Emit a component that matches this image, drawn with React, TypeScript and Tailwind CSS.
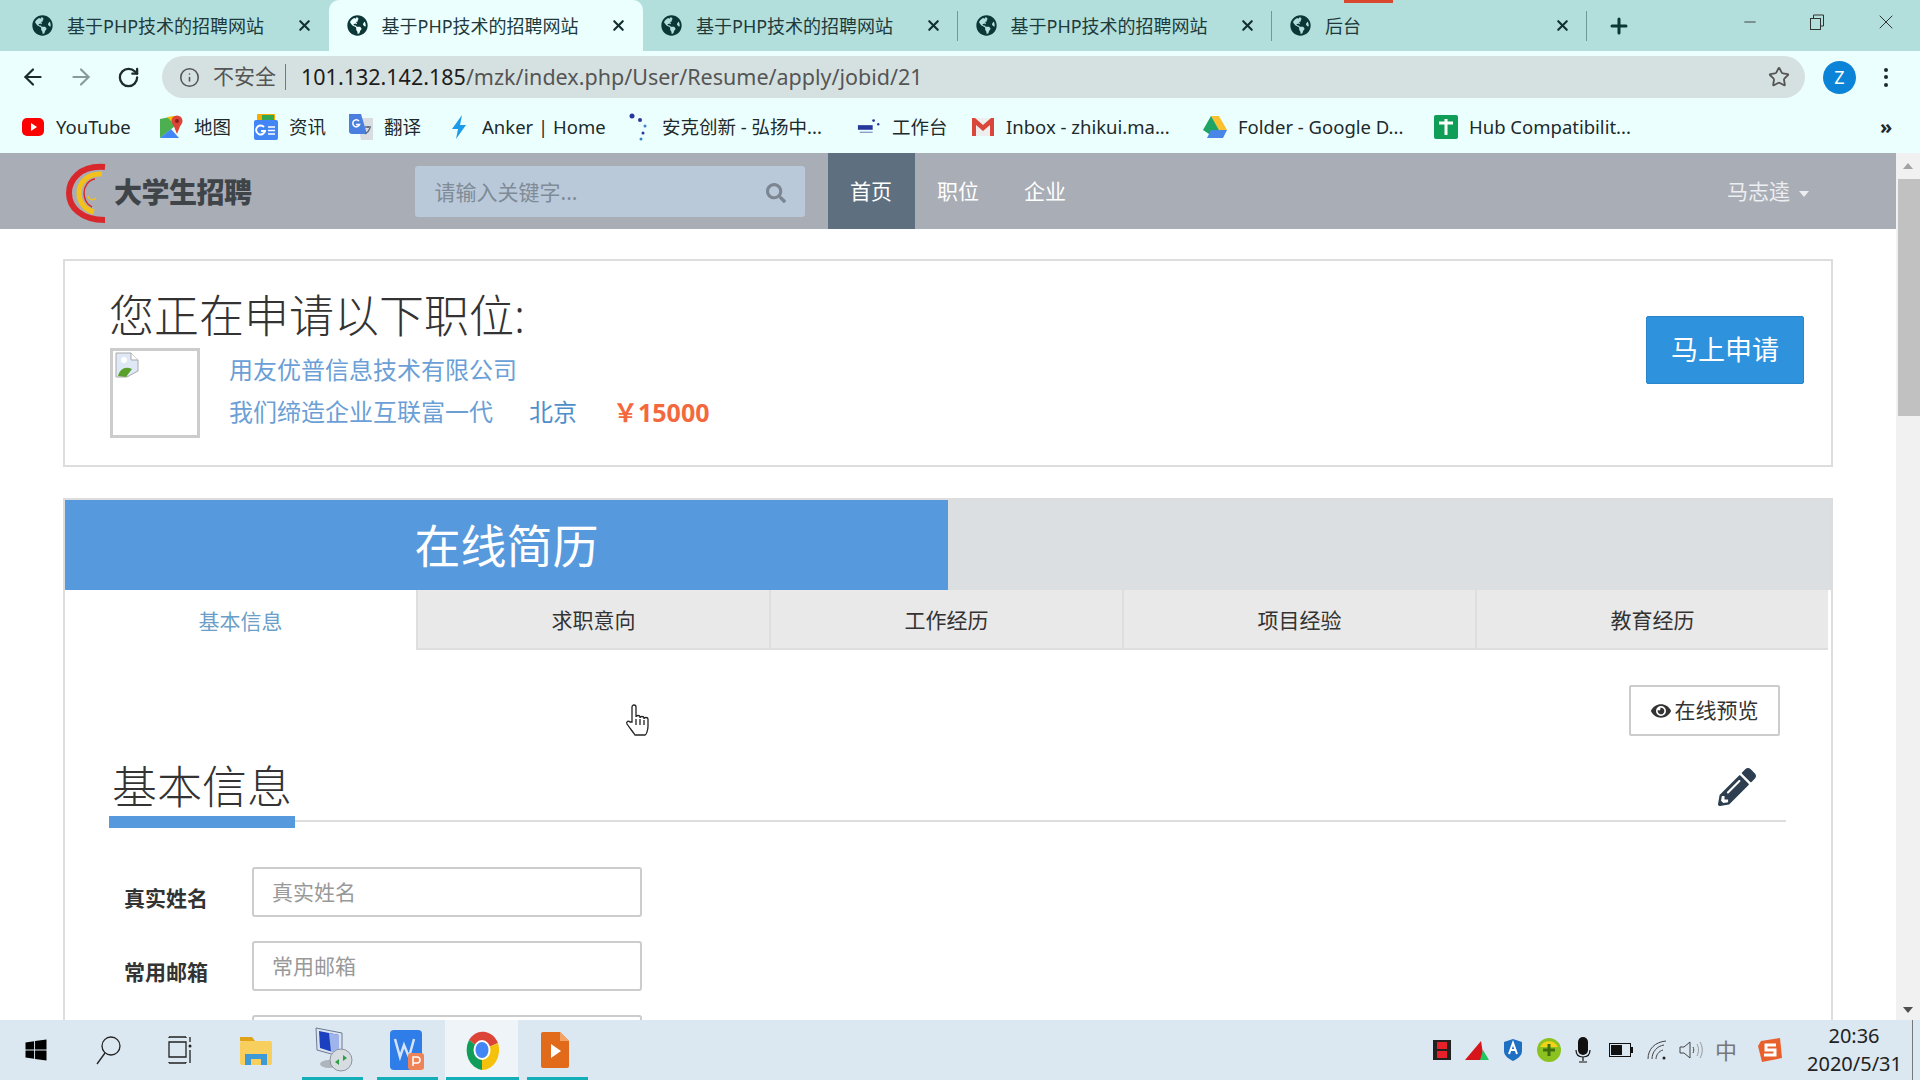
import { ArrowLeft, ArrowRight, Info, Minus, Plus, RotateCw, Star, X } from "lucide-react";
import { FaEye, FaGlobeAmericas, FaPencilAlt, FaSearch, FaWindows } from "react-icons/fa";

const tabs = ["基于PHP技术的招聘网站", "基于PHP技术的招聘网站", "基于PHP技术的招聘网站", "基于PHP技术的招聘网站", "后台"];
const resumeTabs = ["基本信息", "求职意向", "工作经历", "项目经验", "教育经历"];

function YouTubeIcon() {
  return (
    <svg width="22" height="18" viewBox="0 0 22 18">
      <rect x="0" y="0" width="22" height="18" rx="5" fill="#f00" />
      <path d="M9 5l6 4-6 4z" fill="#fff" />
    </svg>
  );
}

function MapsIcon() {
  return (
    <svg width="24" height="26" viewBox="0 0 24 26">
      <path d="M1 5l15-3v10L1 24z" fill="#4caf50" />
      <path d="M1 24l11-9 8 9z" fill="#4285f4" />
      <path d="M8 3l8-1v9z" fill="#fbbc04" />
      <circle cx="18" cy="7" r="5.5" fill="#db4437" />
      <path d="M14 10l4 10 4-10z" fill="#db4437" />
      <circle cx="18" cy="7" r="2" fill="#8c1d18" />
    </svg>
  );
}

function NewsIcon() {
  return (
    <svg width="24" height="26" viewBox="0 0 24 26">
      <rect x="3" y="0" width="18" height="8" rx="1" fill="#f9ab00" />
      <rect x="8" y="1" width="12" height="6" fill="#34a853" />
      <rect x="0" y="6" width="24" height="20" rx="2" fill="#4285f4" />
      <path d="M10 13a4.5 4.5 0 1 0 1 4h-4" fill="none" stroke="#fff" strokeWidth="2" />
      <path d="M14 13h7M14 16.500h7M14 20h7" stroke="#fff" strokeWidth="1.600" />
    </svg>
  );
}

function TranslateIcon() {
  return (
    <svg width="24" height="26" viewBox="0 0 24 26">
      <path d="M8 4h16v22H12z" fill="#d9dde2" />
      <path d="M0 0h12l6 20H3a3 3 0 0 1-3-3z" fill="#4a7fe0" />
      <path d="M10 7a3.500 3.500 0 1 0 .6 3.500H7" fill="none" stroke="#fff" strokeWidth="1.500" />
      <path d="M16 13h6M19 12v2M21 14c-1 3-3 5-5 6" fill="none" stroke="#5f6b7a" strokeWidth="1.300" />
    </svg>
  );
}

function BoltIcon() {
  return (
    <svg width="16" height="24" viewBox="0 0 16 24">
      <path d="M11 0L1 14h6l-2 10 10-14H9z" fill="#1e9be8" />
    </svg>
  );
}

function DotsIcon() {
  return (
    <svg width="22" height="28" viewBox="0 0 22 28">
      <circle cx="4" cy="3" r="2.500" fill="#26389c" />
      <circle cx="12" cy="7" r="2" fill="#26389c" />
      <circle cx="17" cy="13" r="1.500" fill="#3b82c4" />
      <circle cx="15" cy="20" r="1.500" fill="#26389c" />
      <circle cx="13" cy="26" r="1.500" fill="#3b82c4" />
    </svg>
  );
}

function GmailIcon() {
  return (
    <svg width="22" height="18" viewBox="0 0 22 18">
      <rect x="0" y="0" width="22" height="18" fill="#eee" />
      <path d="M0 18V0h3l8 7 8-7h3v18h-4V7l-7 6-7-6v11z" fill="#d9463a" />
    </svg>
  );
}

function DriveIcon() {
  return (
    <svg width="24" height="22" viewBox="0 0 24 22">
      <path d="M8 0h8l8 14h-8z" fill="#fbc02d" />
      <path d="M8 0l8 14-4 8L0 14z" fill="#1fa463" />
      <path d="M4 22l4-8h16l-4 8z" fill="#4a86e8" />
    </svg>
  );
}

function HubIcon() {
  return (
    <svg width="24" height="24" viewBox="0 0 24 24">
      <rect width="24" height="24" rx="2" fill="#0f9d58" />
      <path d="M5 8h14M12 4v16" stroke="#fff" strokeWidth="3" />
    </svg>
  );
}

function AnkerSmallIcon() {
  return (
    <svg width="26" height="20" viewBox="0 0 26 20">
      <circle cx="18" cy="3" r="1.500" fill="#26389c" />
      <circle cx="23" cy="7" r="1.300" fill="#26389c" />
      <rect x="1" y="8" width="16" height="5" fill="#26389c" />
      <rect x="3" y="15" width="14" height="1.500" fill="#8aa0c8" />
    </svg>
  );
}

const bookmarks = [
  { icon: <YouTubeIcon />, label: "YouTube", width: "w-[138px]" },
  { icon: <MapsIcon />, label: "地图", width: "w-[95px]" },
  { icon: <NewsIcon />, label: "资讯", width: "w-[95px]" },
  { icon: <TranslateIcon />, label: "翻译", width: "w-[98px]" },
  { icon: <BoltIcon />, label: "Anker | Home", width: "w-[180px]" },
  { icon: <DotsIcon />, label: "安克创新 - 弘扬中...", width: "w-[230px]" },
  { icon: <AnkerSmallIcon />, label: "工作台", width: "w-[114px]" },
  { icon: <GmailIcon />, label: "Inbox - zhikui.ma...", width: "w-[232px]" },
  { icon: <DriveIcon />, label: "Folder - Google D...", width: "w-[231px]" },
  { icon: <HubIcon />, label: "Hub Compatibilit...", width: "w-[446px]" },
];

function Logo() {
  return (
    <svg width="40" height="62" viewBox="0 0 40 62" fill="none">
      <path d="M39 6C13 4 3 20 3 32c0 14 12 27 36 27" stroke="#d8282c" strokeWidth="6" />
      <path d="M36 13c-15-1-23 9-23 19 0 9 6 17 15 19" stroke="#f2c11c" strokeWidth="5" />
      <path d="M29 18c-7 1-11 8-11 14 0 6 3 12 8 14" stroke="#d8282c" strokeWidth="1.500" />
      <path d="M30 37c-3 3-7 2-8-2" stroke="#f2c11c" strokeWidth="1.500" />
    </svg>
  );
}

function BrokenImage() {
  return (
    <svg width="24" height="26" viewBox="0 0 24 26">
      <path d="M1 1h15l7 7v11L12 25H1z" fill="#dfe8f6" stroke="#a9a9a9" />
      <path d="M16 1v7h7" fill="#fff" stroke="#a9a9a9" />
      <path d="M3 24c2-7 7-10 14-7l-6 8z" fill="#5aa02c" />
      <circle cx="9" cy="8" r="3" fill="#fff" />
    </svg>
  );
}

function TabStrip() {
  return (
    <div className="relative flex h-[51px] items-end bg-[#b2dfdc] pl-[14px]">
      {tabs.map((title, i) => (
        <div
          key={i}
          className={
            i === 1
              ? "relative flex h-[51px] w-[314.500px] items-center rounded-t-[10px] bg-[#ecffff] pl-[18px] pr-[16px]"
              : "relative flex h-[51px] w-[314.500px] items-center pl-[18px] pr-[16px]"
          }
        >
          <FaGlobeAmericas size={21} className="shrink-0 text-[#0c3737]" />
          <span className="ml-[14px] mt-px flex-1 text-[18px] whitespace-nowrap text-[#20393b]">{title}</span>
          <X size={17} strokeWidth={3} className="shrink-0 text-[#12302f]" />
          {i >= 2 && <div className="absolute right-0 top-[11px] h-[30px] w-px bg-[#6f9a98]" />}
        </div>
      ))}
      <Plus size={24} strokeWidth={3} className="mb-[13px] ml-[20px] text-[#0c3737]" />
      <div className="ml-auto mb-[17px] flex items-center text-[#333]">
        <Minus size={18} strokeWidth={1.2} className="mr-[50px]" />
        <svg width="16" height="16" viewBox="0 0 16 16" fill="none" stroke="#333" className="mr-[49px]">
          <rect x="1.500" y="4.500" width="10" height="11" />
          <path d="M4.500 4V1h10v11h-3" />
        </svg>
        <X size={24} strokeWidth={1} className="mr-[22px]" />
      </div>
      <div className="absolute left-[1344px] top-0 h-[3px] w-[49px] bg-[#d9472f]" />
    </div>
  );
}

function Toolbar() {
  return (
    <div className="flex h-[51px] items-center bg-[#ecffff] pt-px">
      <ArrowLeft size={26} strokeWidth={2} className="ml-[20px] text-[#1d2b2b]" />
      <ArrowRight size={26} strokeWidth={2} className="ml-[22px] text-[#8a9a9a]" />
      <RotateCw size={23} strokeWidth={2.400} className="ml-[23px] text-[#1d2b2b]" />
      <div className="ml-[22px] flex h-[42px] w-[1643px] items-center rounded-full bg-[#d5e1e0] pl-[17px] pr-[15px]">
        <Info size={21} strokeWidth={1.800} className="text-[#555]" />
        <span className="ml-[13px] text-[21px] text-[#555]">不安全</span>
        <div className="ml-[9px] h-[26px] w-px bg-[#777]" />
        <span className="ml-[15px] text-[21.500px] whitespace-nowrap text-[#555]">
          <span className="text-[#1c1c1c]">101.132.142.185</span>/mzk/index.php/User/Resume/apply/jobid/21
        </span>
        <Star size={22} strokeWidth={2} className="ml-auto text-[#555]" />
      </div>
      <div className="ml-[18px] flex h-[33px] w-[33px] items-center justify-center rounded-full bg-[#0b84d8] text-[18px] text-white">
        Z
      </div>
      <div className="ml-[28px] flex flex-col gap-[3.500px]">
        <span className="h-[4px] w-[4px] rounded-full bg-[#1d2b2b]" />
        <span className="h-[4px] w-[4px] rounded-full bg-[#1d2b2b]" />
        <span className="h-[4px] w-[4px] rounded-full bg-[#1d2b2b]" />
      </div>
    </div>
  );
}

function BookmarkBar() {
  return (
    <div className="flex h-[51px] items-center bg-[#ecffff] pb-[2px] pl-[21px]">
      {bookmarks.map((b) => (
        <div key={b.label} className={`flex items-center ${b.width}`}>
          <span className="flex w-[24px] shrink-0 justify-center">{b.icon}</span>
          <span className="ml-[11px] text-[18.500px] whitespace-nowrap text-[#20292b]">{b.label}</span>
        </div>
      ))}
      <span className="text-[20px] font-bold text-[#20292b]">»</span>
    </div>
  );
}

function SiteNav() {
  return (
    <div className="flex h-[76px] items-center bg-[#a9adb5] pt-[2px]">
      <div className="ml-[66px] flex items-center">
        <Logo />
        <span className="ml-[8px] text-[28px] font-black tracking-[-0.5px] text-[#3f4448]">大学生招聘</span>
      </div>
      <div className="ml-[163px] mb-[2px] flex h-[51px] w-[390px] items-center rounded-[3px] bg-[#b9c9da] pl-[20px] pr-[19px]">
        <span className="mt-[3px] text-[21px] text-[#7f8b96]">请输入关键字...</span>
        <FaSearch size={20} className="ml-auto mt-[3px] text-[#7c8590]" />
      </div>
      <div className="ml-[23px] -mt-[2px] flex h-[76px] w-[87px] items-center justify-center bg-[#5e7080] pt-[2px] text-[21px] text-white">首页</div>
      <div className="flex w-[87px] items-center justify-center text-[21px] text-white">职位</div>
      <div className="flex w-[87px] items-center justify-center text-[21px] text-white">企业</div>
      <div className="ml-auto mr-[87px] flex items-center text-[21px] text-[#eceef1]">
        马志逵
        <span className="ml-[9px] mt-[3px] h-0 w-0 border-x-[5px] border-t-[6px] border-x-transparent border-t-[#eceef1]" />
      </div>
    </div>
  );
}

function ApplyCard() {
  return (
    <div className="flex h-[208px] items-start border-2 border-[#dddddd] pl-[45px] pr-[27px]">
      <div className="flex-1">
        <h1 className="-ml-px mt-[25px] text-[45px] leading-[60px] font-light text-[#333]">您正在申请以下职位:</h1>
        <div className="mt-[2px] flex">
          <div className="h-[90px] w-[90px] border-[3px] border-[#cccccc] pl-[2px] pt-px">
            <BrokenImage />
          </div>
          <div className="ml-[29px] text-[24px] text-[#6b9fd6]">
            <div className="mt-[4px] leading-[36px]">用友优普信息技术有限公司</div>
            <div className="mt-[6px] flex leading-[36px]">
              <span>我们缔造企业互联富一代</span>
              <span className="ml-[36px] text-[#4f8fc9]">北京</span>
              <span className="ml-[36px] text-[25px] font-bold text-[#f4683d]">￥15000</span>
            </div>
          </div>
        </div>
      </div>
      <button className="mt-[55px] h-[68px] w-[158px] rounded-[2px] border border-[#2a86cc] bg-[#2f92dd] text-[27px] text-white">
        马上申请
      </button>
    </div>
  );
}

function FormRow({ label }: { label?: string }) {
  return (
    <div className="mb-[24px] flex items-center">
      <label className="mt-[13px] w-[143px] pl-[15px] text-[21px] font-bold text-[#333]">{label}</label>
      <div className="flex h-[50px] w-[390px] items-center rounded-[3px] border-2 border-[#cccccc] pl-[18px] pt-[2px] text-[21px] text-[#999]">
        {label}
      </div>
    </div>
  );
}

function ResumeCard() {
  return (
    <div className="mt-[31px] border-2 border-b-0 border-[#dddddd]">
      <div className="flex h-[90px]">
        <div className="flex w-[883px] items-center justify-center bg-[#5799dd] text-[46px] text-white">在线简历</div>
        <div className="flex-1 bg-[#dcdfe2]" />
      </div>
      <div className="flex h-[60px] pr-[3px]">
        {resumeTabs.map((t, i) => (
          <div
            key={t}
            className={
              i === 0
                ? "flex flex-1 items-center justify-center bg-white pt-[3px] text-[21px] text-[#6b9fc9]"
                : "flex flex-1 items-center justify-center border-b-2 border-l-2 border-[#dedede] bg-[#e9e9e9] pt-[3px] text-[21px] text-[#333]"
            }
          >
            {t}
          </div>
        ))}
      </div>
      <div className="pl-[44px] pr-[45px] pt-[35px]">
        <div className="flex justify-end pr-[6px]">
          <button className="flex h-[51px] w-[151px] items-center justify-center rounded-[2px] border-2 border-[#cccccc] text-[21px] text-[#333]">
            <FaEye size={20} className="mr-[4px]" />
            在线预览
          </button>
        </div>
        <div className="relative mt-[22px] flex h-[64px] items-start border-b-2 border-[#dddddd]">
          <h2 className="w-[186px] pl-[3px] text-[45px] leading-[58px] font-light text-[#333]">基本信息</h2>
          <div className="absolute bottom-[-8px] left-0 h-[12px] w-[186px] bg-[#5799dd]" />
          <FaPencilAlt size={38} className="absolute right-[30px] top-[10px] text-[#2c3e50]" />
        </div>
        <div className="mt-[45px]">
          <FormRow label="真实姓名" />
          <FormRow label="常用邮箱" />
          <FormRow />
        </div>
      </div>
    </div>
  );
}

function Scrollbar() {
  return (
    <div className="relative flex h-full w-[24px] shrink-0 flex-col items-center bg-[#f1f1f1]">
      <span className="mt-[10px] h-0 w-0 border-x-[5px] border-b-[6px] border-x-transparent border-b-[#a3a3a3]" />
      <div className="ml-[2px] mt-[10px] h-[237px] w-[22px] bg-[#c1c1c1]" />
      <span className="mt-auto mb-[7px] h-0 w-0 border-x-[5px] border-t-[6px] border-x-transparent border-t-[#505050]" />
    </div>
  );
}

function HandCursor() {
  return (
    <svg
      width="26"
      height="34"
      viewBox="0 0 26 34"
      className="absolute left-[625px] top-[703px]"
      fill="#fff"
      stroke="#222"
      strokeWidth="1.300"
    >
      <path d="M7 19V4a2 2 0 0 1 4 0v10c0-2 4-2 4 0v1c0-2 4-2 4 0v1c0-2 4-2 4 0v7c0 5-2 9-3 9H10c-2-3-6-8-8-11-1-2 1-4 3-2z" />
      <path d="M11 16v6M15 16v6M19 17v5" fill="none" />
    </svg>
  );
}

function FolderIcon() {
  return (
    <svg width="34" height="30" viewBox="0 0 34 30">
      <path d="M1 2h12l3 4h-15z" fill="#e0a317" />
      <rect x="1" y="6" width="32" height="24" rx="2" fill="#f8cf5c" />
      <rect x="6" y="19" width="22" height="11" fill="#3d9ad6" />
      <rect x="12" y="24" width="10" height="6" fill="#f8cf5c" />
    </svg>
  );
}

function RemoteIcon() {
  return (
    <svg width="38" height="46" viewBox="0 0 38 46">
      <path d="M1 1l26 5v24L2 23z" fill="#dbe3ef" stroke="#6b7a94" />
      <path d="M4 4l20 4v19L5 21z" fill="#1c3fc0" />
      <path d="M14 6l10 2v19l-8-2z" fill="#9fb4ea" />
      <ellipse cx="14" cy="37" rx="9" ry="4" fill="#aeb4bc" />
      <circle cx="26" cy="33" r="11" fill="#d7dce0" stroke="#8b949c" />
      <path d="M20 35l4-3v6zM32 31l-4 3v-6z" fill="#2f9e44" />
    </svg>
  );
}

function WpsIcon() {
  return (
    <svg width="34" height="40" viewBox="0 0 34 40">
      <rect x="0" y="0" width="32" height="40" rx="4" fill="#2f7de8" />
      <path d="M5 9l5 18 4-12 5 12 5-18" fill="none" stroke="#d5e4fb" strokeWidth="2.500" />
      <rect x="18" y="23" width="16" height="17" rx="3" fill="#ef8358" />
      <path d="M23 36V27h4a2.500 2.500 0 0 1 0 6h-4" fill="none" stroke="#fff" strokeWidth="1.500" />
    </svg>
  );
}

function ChromeIcon() {
  return (
    <svg width="34" height="40" viewBox="0 0 34 40">
      <path d="M17 20L4 10A17 20 0 0 1 33 13z" fill="#db4437" />
      <path d="M17 20L33 13A17 20 0 0 1 17 40z" fill="#f4c20d" />
      <path d="M17 20L17 40A17 20 0 0 1 4 10z" fill="#0f9d58" />
      <ellipse cx="17" cy="20" rx="8.500" ry="10" fill="#fff" />
      <ellipse cx="17" cy="20" rx="6.500" ry="8" fill="#4285f4" />
    </svg>
  );
}

function PlayFileIcon() {
  return (
    <svg width="28" height="36" viewBox="0 0 28 36">
      <path d="M2 0h17l9 9v25a2 2 0 0 1-2 2H2a2 2 0 0 1-2-2V2a2 2 0 0 1 2-2z" fill="#e26a1b" />
      <path d="M19 0l9 9h-9z" fill="#f4a261" />
      <path d="M10 12l10 7-10 7z" fill="#fff" />
    </svg>
  );
}

function TrayIcons() {
  return (
    <div className="flex items-center">
      <svg width="18" height="20" viewBox="0 0 18 20" className="mr-[14px]">
        <rect width="18" height="20" fill="#222" />
        <rect x="4" y="2" width="10" height="7" fill="#e8202a" />
        <rect x="4" y="11" width="10" height="7" fill="#e8202a" />
      </svg>
      <svg width="24" height="20" viewBox="0 0 24 20" className="mr-[14px]">
        <path d="M0 20L16 1l3 19z" fill="#d7141a" />
        <path d="M15 20l3-10 6 10z" fill="#22c55e" />
      </svg>
      <svg width="20" height="22" viewBox="0 0 20 22" className="mr-[14px]">
        <path d="M1 3l9-3 9 3v9c0 5-5 8-9 10-4-2-9-5-9-10z" fill="#1f6fc2" />
        <path d="M6 15l4-11 4 11M7.500 11h5" fill="none" stroke="#fff" strokeWidth="2" />
      </svg>
      <svg width="24" height="24" viewBox="0 0 24 24" className="mr-[14px]">
        <circle cx="12" cy="12" r="12" fill="#8cc21f" />
        <path d="M3 9a10 10 0 0 1 18 0z" fill="#f2d21a" />
        <path d="M12 6v12M6 12h12" stroke="#3d6e0f" strokeWidth="3" />
      </svg>
      <svg width="16" height="26" viewBox="0 0 16 26" className="mr-[18px]">
        <rect x="3" y="0" width="10" height="18" rx="5" fill="#111" />
        <path d="M1 13c0 5 3 7 7 7s7-2 7-7M8 20v4M4 25h8" fill="none" stroke="#111" strokeWidth="1.200" />
      </svg>
      <svg width="24" height="14" viewBox="0 0 24 14" className="mr-[14px]">
        <rect x=".5" y=".5" width="21" height="13" fill="none" stroke="#111" />
        <rect x="2" y="2" width="11" height="10" fill="#111" />
        <rect x="22" y="4" width="2" height="6" fill="#111" />
      </svg>
      <svg width="20" height="20" viewBox="0 0 20 20" fill="none" stroke="#444" className="mr-[12px]">
        <path d="M1 19C1 9 8 2 19 1M5 19C5 12 10 6 17 5M9 19c0-4 3-8 7-9" />
        <circle cx="17" cy="18" r="1.500" fill="#222" stroke="none" />
      </svg>
      <svg width="24" height="20" viewBox="0 0 24 20" fill="none" stroke="#444" className="mr-[12px]">
        <path d="M1 7h4l6-5v16l-6-5H1z" />
        <path d="M14 7c1 2 1 4 0 6" />
        <path d="M18 4c2 4 2 8 0 12M21 2c3 5 3 11 0 16" stroke="#999" />
      </svg>
      <span className="mr-[21px] text-[22px] leading-none text-[#777]">中</span>
      <svg width="24" height="24" viewBox="0 0 24 24" className="mr-[25px]">
        <path d="M3 3l19-3 2 20-20 4-4-16z" fill="#e8602c" />
        <path d="M18 7H8v5h9v5H6" fill="none" stroke="#fff" strokeWidth="3" />
      </svg>
      <div className="w-[94px] text-center text-[20px] leading-[28px] whitespace-nowrap text-[#222]">
        <div>20:36</div>
        <div>2020/5/31</div>
      </div>
    </div>
  );
}

function Taskbar() {
  const underline = "absolute bottom-0 h-[3px] bg-[#14aeb8]";
  return (
    <div className="relative flex h-[60px] shrink-0 items-center bg-[#dbe8f1]">
      <FaWindows size={24} className="ml-[24px] text-black" />
      <svg width="26" height="30" viewBox="0 0 26 30" fill="none" stroke="#222" strokeWidth="1.300" className="ml-[47px]">
        <circle cx="16" cy="11" r="9" />
        <path d="M10 18L2 29" />
      </svg>
      <svg width="24" height="28" viewBox="0 0 24 28" fill="none" stroke="#222" strokeWidth="1.300" className="ml-[47px]">
        <path d="M1 1h17M1 27h17M1 6h17v15H1zM1 1v1M18 1v1M1 26v1M18 26v1" />
        <circle cx="22" cy="10" r="1.500" fill="#222" stroke="none" />
        <path d="M22 1v5M22 14v13" />
      </svg>
      <span className="ml-[47px]"><FolderIcon /></span>
      <span className="ml-[42px]"><RemoteIcon /></span>
      <span className="ml-[37px]"><WpsIcon /></span>
      <div className="ml-[21px] flex h-full w-[73px] items-center justify-center bg-[#eef4f8]">
        <ChromeIcon />
      </div>
      <span className="ml-[23px]"><PlayFileIcon /></span>
      <div className={`${underline} left-[302px] w-[61px]`} />
      <div className={`${underline} left-[377px] w-[61px]`} />
      <div className={`${underline} left-[446px] w-[73px]`} />
      <div className={`${underline} left-[527px] w-[61px]`} />
      <div className="ml-auto mr-[19px]">
        <TrayIcons />
      </div>
      <div className="absolute right-[7px] top-0 h-full w-px bg-[#777]" />
    </div>
  );
}

export default function App() {
  return (
    <div className="relative flex h-screen w-[1920px] flex-col overflow-hidden bg-white font-['Noto_Sans','Noto_Sans_CJK_SC',sans-serif]">
      <TabStrip />
      <Toolbar />
      <BookmarkBar />
      <div className="flex min-h-0 flex-1">
        <div className="min-w-0 flex-1 overflow-hidden">
          <SiteNav />
          <div className="pl-[63px] pr-[63px] pt-[30px]">
            <ApplyCard />
            <ResumeCard />
          </div>
        </div>
        <Scrollbar />
      </div>
      <Taskbar />
      <HandCursor />
    </div>
  );
}
